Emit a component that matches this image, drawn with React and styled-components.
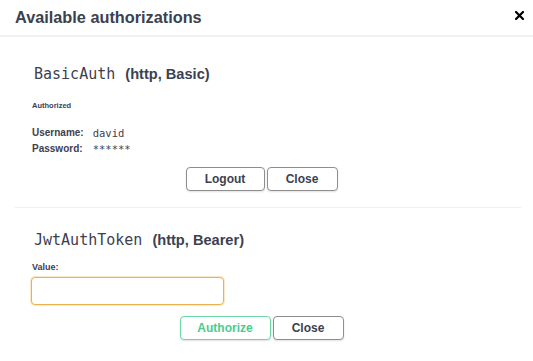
import React from "react";
import styled, { createGlobalStyle } from "styled-components";

const Global = createGlobalStyle`
  html, body { margin: 0; padding: 0; background: #fff; }
  body { font-family: "Liberation Sans", Arial, sans-serif; color: #3b4151; }
  * { box-sizing: border-box; }
`;

const Modal = styled.div`
  width: 533px;
  height: 361px;
  background: #fff;
  overflow: hidden;
`;

const Header = styled.div`
  display: flex;
  align-items: center;
  justify-content: space-between;
  height: 37px;
  padding: 0 8px 2px 15px;
  border-bottom: 2px solid #f1f1f1;
`;

const Title = styled.h3`
  margin: 0;
  font-size: 16.3px;
  font-weight: 700;
  color: #3b4151;
  line-height: 22px;
`;

const CloseIcon = styled.button`
  display: flex;
  align-items: center;
  justify-content: center;
  width: 12px;
  height: 12px;
  padding: 0;
  border: none;
  background: none;
  margin-top: -2px;
`;

const Content = styled.div`
  padding: 0 12px 0 15px;
`;

const AuthContainer = styled.div`
  padding: ${(p) => p.$top}px 0 ${(p) => p.$bottom}px 17px;
  border-bottom: ${(p) => (p.$divider ? "1px solid #efefef" : "none")};
`;

const Heading = styled.h4`
  margin: 0;
  display: flex;
  align-items: baseline;
  gap: 10px;
  line-height: 20px;
`;

const Code = styled.code`
  font-family: "DejaVu Sans Mono", monospace;
  font-size: 15px;
  font-weight: 400;
  color: #3b4151;
  padding-left: 2px;
`;

const Scheme = styled.span`
  font-size: 14.6px;
  font-weight: 700;
  color: #3b4151;
`;

const Status = styled.h6`
  margin: 17px 0 0;
  font-size: 7.5px;
  line-height: 10px;
  font-weight: 700;
  color: #3b4151;
`;

const Fields = styled.div`
  margin-top: 14px;
  display: grid;
  grid-template-columns: auto 1fr;
  column-gap: 9px;
`;

const FieldLabel = styled.label`
  font-size: 10px;
  font-weight: 700;
  line-height: 16px;
  color: #3b4151;
`;

const FieldValue = styled.code`
  font-family: "DejaVu Sans Mono", monospace;
  font-size: 10.5px;
  line-height: 16px;
  color: #3b4151;
`;

const ValueLabel = styled.label`
  display: block;
  margin-top: 11px;
  font-size: 9px;
  font-weight: 700;
  line-height: 12px;
  color: #3b4151;
`;

const Input = styled.input`
  display: block;
  margin: 4px 0 0 -1px;
  width: 193px;
  height: 28px;
  border: 1px solid #ecb24f;
  box-shadow: 0 0 0 1px rgba(240, 190, 100, 0.35);
  border-radius: 4px;
  outline: none;
  background: #fff;
  font-size: 12px;
  padding: 4px 8px;
`;

const ButtonRow = styled.div`
  display: flex;
  justify-content: center;
  gap: 2px;
  margin-top: ${(p) => p.$top}px;
  padding-right: 30px;
`;

const Button = styled.button`
  width: ${(p) => p.$w}px;
  height: 24px;
  border-radius: 4px;
  background: #fff;
  border: 1px solid ${(p) => (p.$primary ? "#6ad7a4" : "#8e8e8e")};
  box-shadow: 0 1px 2px rgba(0, 0, 0, 0.12);
  font-family: "Liberation Sans", Arial, sans-serif;
  font-size: 12px;
  font-weight: 700;
  color: ${(p) => (p.$primary ? "#49cc90" : "#3b4151")};
  padding: 0;
  cursor: pointer;
`;

export default function App() {
  return (
    <>
      <Global />
      <Modal>
        <Header>
          <Title>Available authorizations</Title>
          <CloseIcon aria-label="Close">
            <svg width="9" height="9" viewBox="0 0 9 9">
              <path d="M1 1 L8 8 M8 1 L1 8" stroke="#000" strokeWidth="2.2" strokeLinecap="square" />
            </svg>
          </CloseIcon>
        </Header>
        <Content>
          <AuthContainer $top={27} $bottom={16} $divider>
            <Heading>
              <Code>BasicAuth</Code>
              <Scheme>(http, Basic)</Scheme>
            </Heading>
            <Status>Authorized</Status>
            <Fields>
              <FieldLabel>Username:</FieldLabel>
              <FieldValue>david</FieldValue>
              <FieldLabel>Password:</FieldLabel>
              <FieldValue>******</FieldValue>
            </Fields>
            <ButtonRow $top={10}>
              <Button $w={79}>Logout</Button>
              <Button $w={71}>Close</Button>
            </ButtonRow>
          </AuthContainer>
          <AuthContainer $top={22} $bottom={0}>
            <Heading>
              <Code>JwtAuthToken</Code>
              <Scheme>(http, Bearer)</Scheme>
            </Heading>
            <ValueLabel>Value:</ValueLabel>
            <Input type="text" />
            <ButtonRow $top={11}>
              <Button $w={91} $primary>Authorize</Button>
              <Button $w={71}>Close</Button>
            </ButtonRow>
          </AuthContainer>
        </Content>
      </Modal>
    </>
  );
}
